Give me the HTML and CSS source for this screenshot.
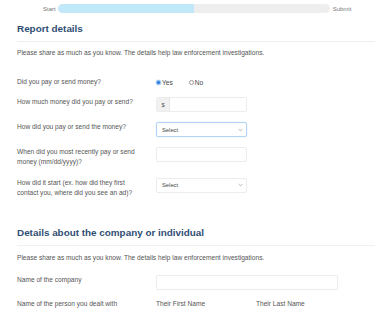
FILE: index.html
```html
<!DOCTYPE html>
<html>
<head>
<meta charset="utf-8">
<link rel="stylesheet" href="styles.css">
</head>
<body>
<div class="page">
  <div class="progress">
    <span class="progress-label">Start</span>
    <div class="track"><div class="fill" style="width:50%"></div></div>
    <span class="progress-label">Submit</span>
  </div>

  <section class="section">
    <h2 class="title">Report details</h2>
    <p class="intro">Please share as much as you know. The details help law enforcement investigations.</p>
    <div class="rows">
      <div class="row row-radio">
        <div class="label">Did you pay or send money?</div>
        <div class="control radios">
          <span class="radio"><span class="dot on"></span>Yes</span>
          <span class="radio"><span class="dot"></span>No</span>
        </div>
      </div>
      <div class="row">
        <div class="label">How much money did you pay or send?</div>
        <div class="control box money"><span class="prefix">$</span></div>
      </div>
      <div class="row">
        <div class="label">How did you pay or send the money?</div>
        <div class="control box select focus"><span>Select</span><svg class="chev" viewBox="0 0 6 4"><path d="M0.8 0.8 L3 3 L5.2 0.8" fill="none" stroke="#888" stroke-width="0.7"/></svg></div>
      </div>
      <div class="row">
        <div class="label">When did you most recently pay or send money (mm/dd/yyyy)?</div>
        <div class="control box"></div>
      </div>
      <div class="row">
        <div class="label">How did it start (ex. how did they first contact you, where did you see an ad)?</div>
        <div class="control box select"><span>Select</span><svg class="chev" viewBox="0 0 6 4"><path d="M0.8 0.8 L3 3 L5.2 0.8" fill="none" stroke="#888" stroke-width="0.7"/></svg></div>
      </div>
    </div>
  </section>

  <section class="section second">
    <h2 class="title">Details about the company or individual</h2>
    <p class="intro">Please share as much as you know. The details help law enforcement investigations.</p>
    <div class="rows">
      <div class="row">
        <div class="label">Name of the company</div>
        <div class="control box wide"></div>
      </div>
      <div class="row">
        <div class="label">Name of the person you dealt with</div>
        <div class="names"><span class="name">Their First Name</span><span class="name">Their Last Name</span></div>
      </div>
    </div>
  </section>
</div>
</body>
</html>
```

FILE: styles.css
```css
* { box-sizing: border-box; }
html, body { margin: 0; padding: 0; background: #fff; }
body { font-family: "Liberation Sans", Arial, sans-serif; color: #555; }
.page { padding: 0 0 0 17px; overflow: hidden; height: 310px; }

.progress { display: flex; align-items: center; height: 17px; padding-left: 26px; }
.progress-label { font-size: 6px; color: #777; }
.track { width: 272px; height: 9px; background: #eeeeee; border-radius: 5px; margin: 0 3px 0 2px; overflow: hidden; }
.fill { height: 100%; background: #c1e8f8; border-radius: 5px 0 0 5px; }

.title { margin: 6px 0 0 0; font-size: 9.9px; line-height: 12px; font-weight: bold; color: #2f4e74; padding-bottom: 6px; border-bottom: 1px solid #f0f0f0; }
.intro { margin: 6px 0 0 0; font-size: 6.6px; line-height: 10px; color: #555; }

.rows { display: flex; flex-direction: column; gap: 10px; margin-top: 19px; }
.row { display: flex; align-items: flex-start; }
.label { width: 139px; font-size: 6.6px; line-height: 10.3px; padding-right: 14px; color: #555; }
.row-radio .label { line-height: 10px; }
.control { width: 91px; }
.radios { display: flex; align-items: center; height: 10px; font-size: 6.6px; gap: 16px; color: #444; }
.radio { display: flex; align-items: center; gap: 1px; }
.dot { width: 5px; height: 5px; border-radius: 50%; border: 0.6px solid #999; display: inline-block; }
.dot.on { background: #2a7de1; border-color: #9cc3ef; box-shadow: 0 0 0 0.5px #cde0f7; }

.box { height: 15px; border: 1px solid #ececec; border-radius: 2px; background: #fff; display: flex; align-items: center; font-size: 5.8px; color: #444; }
.prefix { width: 13px; height: 100%; background: #f1f1f1; display: flex; align-items: center; justify-content: center; border-right: 1px solid #e8e8e8; font-size: 5.8px; color: #555; }
.select { justify-content: space-between; padding: 0 3px 0 5px; }
.chev { width: 5px; height: 4px; }
.focus { border: 1px solid #b3d4f4; box-shadow: 0 0 1.5px #c7e0f8; }
.wide { width: 182px; }

.second { margin-top: 29px; }
.second .intro { margin-top: 7px; }
.second .rows { margin-top: 12px; gap: 9px; }
.names { display: flex; font-size: 6.6px; line-height: 10px; }
.name { width: 100px; }
```
